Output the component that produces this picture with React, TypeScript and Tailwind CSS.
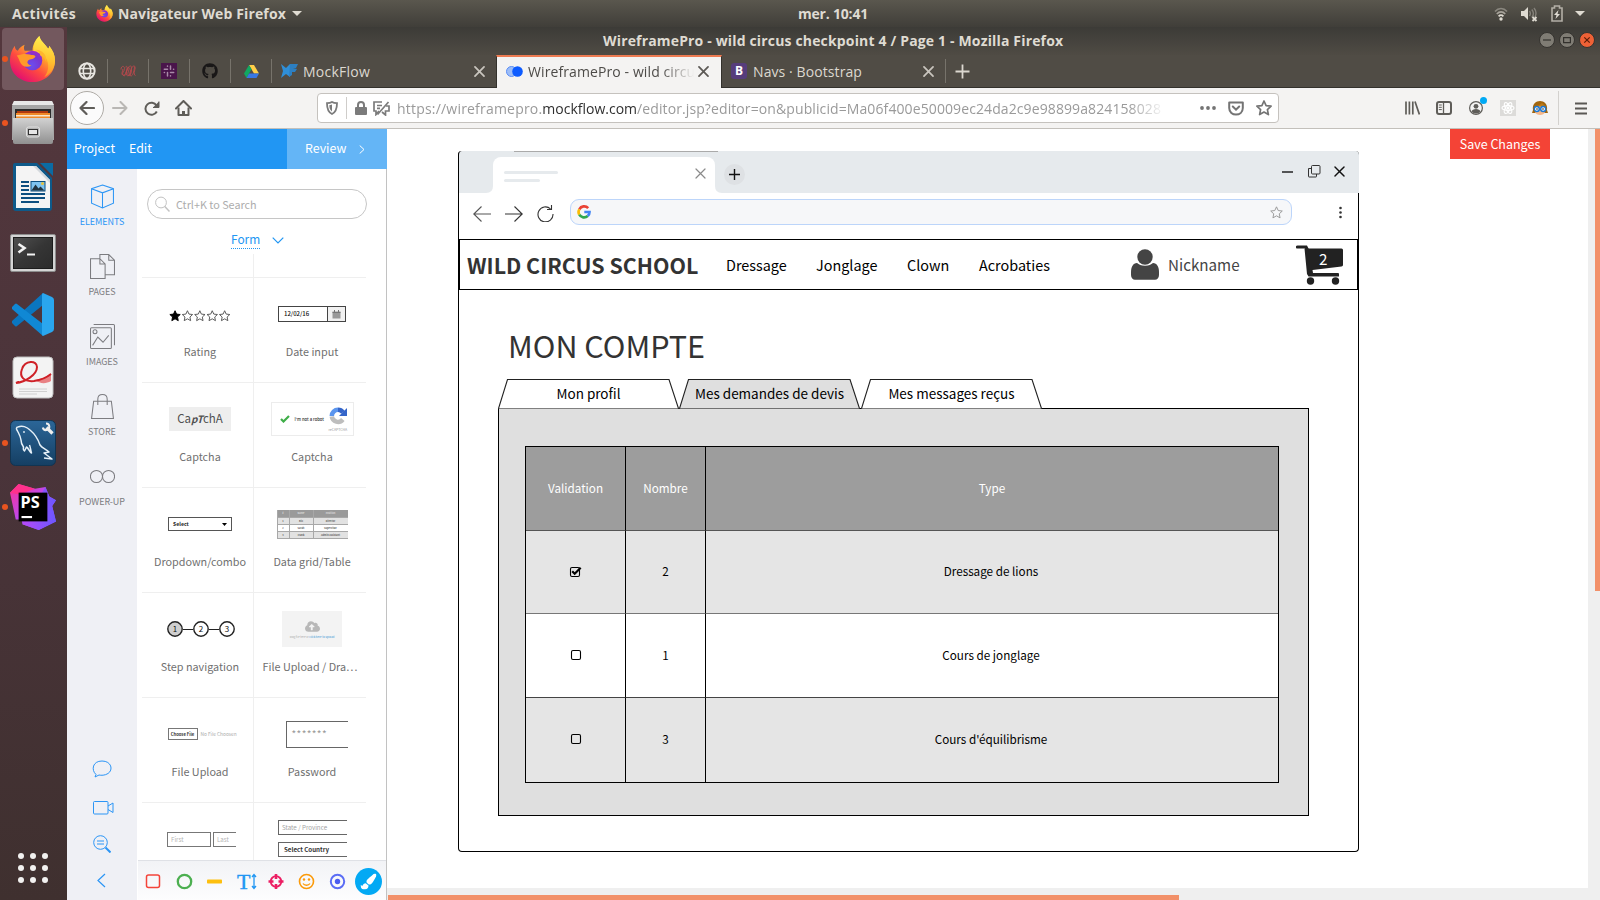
import type { ReactNode } from "react";
import { FaGithub, FaCloudUploadAlt, FaPaintBrush } from "react-icons/fa";

const UI = "font-['Open_Sans',sans-serif] whitespace-nowrap";
const SRC = "font-['Noto_Sans_CJK_SC','Noto_Sans',sans-serif] whitespace-nowrap";

/* ---------- shared drawings ---------- */

function FirefoxLogo({ size, id }: { size: number; id: string }) {
  return (
    <svg width={size} height={size} viewBox="0 0 48 48">
      <defs>
        <linearGradient id={id + "a"} x1="0.85" y1="0.1" x2="0.25" y2="0.95">
          <stop offset="0" stopColor="#fff44f" />
          <stop offset="0.35" stopColor="#ffa52a" />
          <stop offset="0.65" stopColor="#ff4a40" />
          <stop offset="1" stopColor="#e3106f" />
        </linearGradient>
        <radialGradient id={id + "b"} cx="0.45" cy="0.75" r="0.8">
          <stop offset="0" stopColor="#6a4ff0" />
          <stop offset="0.6" stopColor="#7a35cf" />
          <stop offset="1" stopColor="#a928c4" />
        </radialGradient>
        <linearGradient id={id + "c"} x1="0.6" y1="0" x2="0.5" y2="1">
          <stop offset="0" stopColor="#fff250" />
          <stop offset="0.6" stopColor="#ffc02f" />
          <stop offset="1" stopColor="#ff8a2c" />
        </linearGradient>
      </defs>
      <path fill={`url(#${id}a)`} d="M6 10c0 3 1 4 3 5 2-3 4-5 7-6-1 2-1 4 0 6h8c0-6 3-11 7-15 1 5 5 7 9 13 1-1 1-2 1-3 4 5 6 10 6 15 0 13-10 22-23 22S1 38 1 25c0-6 2-11 5-15z" />
      <path fill={`url(#${id}c)`} d="M31 0c1 5 5 7 9 13 1-1 1-2 1-3 4 5 6 10 6 15 0 8-5 14-11 17 5-6 5-14 2-19-3-4-9-6-12-6-3-5 1-13 5-17z" />
      <circle cx="24" cy="25" r="10" fill={`url(#${id}b)`} />
      <path fill="#ff9a2a" d="M8 20c5-2 10-2 13-1 3 1 5 0 6 2-2 4-7 2-8 5-1 2 2 4 4 4-5 3-10 1-12-4-1-3-2-4-3-6z" />
      <path fill="#ffb52c" d="M27 14c7 0 12 5 11 13-1-4-3-6-6-7 0-3-2-5-5-6z" />
    </svg>
  );
}

function Cross({ s = 11, c = "#c9c5be", w = 1.6 }: { s?: number; c?: string; w?: number }) {
  return (
    <svg width={s} height={s} viewBox="0 0 10 10" fill="none" stroke={c} strokeWidth={w} strokeLinecap="round">
      <path d="M.9.9l8.200 8.200M9.100.9L.9 9.100" />
    </svg>
  );
}

const starPath = "M8 1l2.100 4.600 5 .6-3.700 3.400 1 5L8 12.100l-4.400 2.500 1-5L.9 6.200l5-.6z";

/* ---------- desktop bars ---------- */

function TopBar() {
  return (
    <div className={`${UI} flex h-[27px] shrink-0 items-center bg-linear-to-b from-[#5a574e] to-[#403e39] text-[14px] font-bold text-[#dfdbd2]`}>
      <span className="ml-3 w-[84px] tracking-[0.36px]">Activités</span>
      <FirefoxLogo size={17} id="ft" />
      <span className="ml-[5px] w-[174px] tracking-[0.13px]">Navigateur Web Firefox</span>
      <svg width="10" height="5" viewBox="0 0 10 5"><path d="M0 0h10L5 5z" fill="#dfdbd2" /></svg>
      <span className="ml-[496px] tracking-[-0.2px]">mer. 10:41</span>
      <div className="mr-[15px] ml-auto flex items-center">
        <svg width="14" height="14" viewBox="0 0 14 14" fill="none" strokeWidth="1.700">
          <path d="M1 4.500c3.500-4 8.500-4 12 0" stroke="#8a877f" />
          <path d="M2.800 7c2.500-2.800 6-2.800 8.400 0" stroke="#a8a49b" />
          <path d="M4.600 9.400c1.500-1.600 3.300-1.600 4.800 0" stroke="#dfdbd2" />
          <circle cx="7" cy="12" r="1.700" fill="#dfdbd2" />
        </svg>
        <svg className="ml-[13px]" width="17" height="16" viewBox="0 0 17 16" fill="none">
          <path d="M0 5h3l4-4v13l-4-4H0z" fill="#dfdbd2" />
          <path d="M8.500 5c1 1.500 1 3.500 0 5M10.800 3.500c2 2.500 2 5.500 0 8M13 2c2.500 3 2.500 6 1 9" stroke="#85827a" strokeWidth="1.400" />
          <path d="M11.500 11l4 4m0-4l-4 4" stroke="#dfdbd2" strokeWidth="1.800" />
        </svg>
        <svg className="ml-[13px]" width="12" height="17" viewBox="0 0 12 17" fill="none">
          <path d="M1 3h2.500V1h5v2H11v13H1z" stroke="#b3afa6" strokeWidth="1.600" />
          <path d="M7.500 5L3 10h2.500L4.500 14 9 9H6.500z" fill="#dfdbd2" />
        </svg>
        <svg className="ml-[12px]" width="10" height="5" viewBox="0 0 10 5"><path d="M0 0h10L5 5z" fill="#dfdbd2" /></svg>
      </div>
    </div>
  );
}

function Dot({ on }: { on: boolean }) {
  return <span className="flex w-[10px] justify-center">{on && <span className="size-[6px] rounded-full bg-[#e95420]" />}</span>;
}

function Launcher() {
  const apps: { on: boolean; icon: ReactNode }[] = [
    { on: true, icon: <FirefoxLogo size={47} id="fl" /> },
    {
      on: true,
      icon: (
        <svg width="44" height="46" viewBox="0 0 44 46">
          <defs><linearGradient id="cab" x1="0" y1="0" x2="0" y2="1"><stop offset="0" stopColor="#d2d2d2" /><stop offset="1" stopColor="#909090" /></linearGradient></defs>
          <path d="M3 1h38l2 5v34H1V6z" fill="#a6a6a6" />
          <path d="M3 1h38l2 4H1z" fill="#e8e8e8" />
          <path d="M4 9h36v11H4z" fill="#2c2c2c" />
          <path d="M6 11h31v3H6z" fill="#b0390f" /><path d="M5 13h34v5H5z" fill="#f08a28" /><path d="M5 15h34v1.500H5z" fill="#f7e6cc" />
          <path d="M2 18h40v24q0 2-2 2H4q-2 0-2-2z" fill="url(#cab)" />
          <rect x="15.500" y="27" width="13" height="10" rx="2" fill="#b4b4b4" stroke="#e0e0e0" />
          <rect x="17.500" y="29.500" width="9" height="5" fill="#e6e6e6" stroke="#333" />
        </svg>
      ),
    },
    {
      on: false,
      icon: (
        <svg width="42" height="50" viewBox="0 0 42 50">
          <path d="M3 1h22l15 15v30q0 3-3 3H4q-3 0-3-3V3q0-2 2-2z" fill="#0e5a8a" />
          <path d="M28 1h13v13z" fill="#0b6ba3" />
          <path d="M4 4h20l14 14v28H4z" fill="#f4f4f4" />
          <path d="M24 4l14 14v3L21 4z" fill="#d3d8dc" />
          <path d="M9 20h8M9 24h8M9 28h8M9 32h24M9 36h24M9 40h18" stroke="#0d4f80" strokeWidth="1.800" />
          <rect x="19" y="19.500" width="14" height="9.500" fill="#7fc3ef" stroke="#0d4f80" />
          <path d="M19.500 28.500l4-6 3 4 2-2 4 4z" fill="#23343f" /><circle cx="30.500" cy="21.500" r="1.500" fill="#e9c33c" />
        </svg>
      ),
    },
    {
      on: false,
      icon: (
        <svg className="mt-[3px]" width="46" height="38" viewBox="0 0 46 38">
          <defs><linearGradient id="term" x1="0" y1="0" x2="1" y2="1"><stop offset="0" stopColor="#505050" /><stop offset="0.500" stopColor="#353535" /><stop offset="1" stopColor="#2b2b2b" /></linearGradient></defs>
          <rect x=".5" y=".5" width="45" height="37" rx="1.500" fill="#d4d4d4" stroke="#8d8d8d" />
          <rect x="3.500" y="3.500" width="39" height="31" fill="url(#term)" stroke="#1c1c1c" />
          <path d="M8.500 10l6 4-6 4.500" fill="none" stroke="#f2f2f2" strokeWidth="2.600" />
          <path d="M17 20.500h8" stroke="#f2f2f2" strokeWidth="2" />
        </svg>
      ),
    },
    {
      on: false,
      icon: (
        <svg className="mb-px" width="42" height="43" viewBox="0 0 42 43">
          <path d="M31 0v12L5 33q-1 1-2 0l-3-3q-.6-1 0-2z" fill="#0a76c0" />
          <path d="M31 43V31L5 11q-1-1-2 0l-3 3q-.6 1 0 2z" fill="#1088d4" />
          <path d="M31 0l9 4q2 1 2 3v29q0 2-2 3l-9 4q-1-.5-1-2V2q0-1.500 1-2z" fill="#2aa6ee" />
        </svg>
      ),
    },
    {
      on: false,
      icon: (
        <svg className="mb-[3px]" width="42" height="43" viewBox="0 0 42 43">
          <rect x="1" y="1" width="40" height="41" rx="4" fill="#f3f3f3" stroke="#bdbdbd" />
          <path d="M23 24c7-1 12-3 16-7v8c-5 3-11 3-16-1z" fill="#e98284" />
          <path d="M4 27c9-1 21-8 21-16 0-7-12-7-15 2-3 8 2 13 12 12 7-1 12-3 17-7M7 26c-1 0-3 1-3 1" fill="none" stroke="#cf2127" strokeWidth="2" />
          <path d="M7 33h28M7 35.500h28M7 38h18" stroke="#d0d0d0" />
        </svg>
      ),
    },
    {
      on: true,
      icon: (
        <svg width="46" height="46" viewBox="0 0 46 46">
          <defs><linearGradient id="sql" x1="0" y1="0" x2="0" y2="1"><stop offset="0" stopColor="#2b6698" /><stop offset="1" stopColor="#153f63" /></linearGradient></defs>
          <rect x=".5" y=".5" width="45" height="45" rx="5" fill="url(#sql)" stroke="#123451" />
          <path d="M8 7c-2 0-2 2-.5 4 1.500 3 3 5 3.500 9 0 3 1 5 2.500 7 0 2-1 3 1 4l2-4c2 1 3 5 5 6-1-3-1-6-2-8M8 7c4-2 9 0 12 3 6 5 8 9 10 15 2 3 6 4 9 7l-5 1 8 6-8-1" fill="none" stroke="#e5f0f8" strokeWidth="1.500" strokeLinejoin="round" />
          <circle cx="14" cy="12" r=".9" fill="#e5f0f8" />
          <path d="M36.500 7.500l6 6" stroke="#eee" strokeWidth="3.200" fill="none" />
          <path d="M36 3.500a3.300 3.300 0 1 1-3.200 4" stroke="#eee" strokeWidth="2" fill="none" />
        </svg>
      ),
    },
    {
      on: true,
      icon: (
        <svg width="48" height="48" viewBox="0 0 48 48">
          <defs>
            <linearGradient id="psa" x1="0" y1="0" x2="1" y2="1"><stop offset="0" stopColor="#ff318c" /><stop offset="0.500" stopColor="#b74af7" /><stop offset="1" stopColor="#6b57ff" /></linearGradient>
            <linearGradient id="psb" x1="0" y1="0" x2="1" y2="0"><stop offset="0" stopColor="#b74af7" /><stop offset="1" stopColor="#6b57ff" /></linearGradient>
          </defs>
          <path d="M0 9L9 0l17 5 11-2 4 10 7 4-4 6 4 16-18 9-17-6-1-5-6 0z" fill="url(#psa)" />
          <path d="M37 3l4 10 7 4-4 6 4 16-18 9-17-6z" fill="url(#psb)" />
          <path d="M0 9L9 0l17 5-16 6z" fill="#ff318c" />
          <rect x="9" y="9" width="30" height="30" fill="#000" />
          <text x="11" y="25" fill="#fff" fontSize="17" fontWeight="bold" fontFamily="Noto Sans, sans-serif">PS</text>
          <path d="M12 34.500h11" stroke="#fff" strokeWidth="2.200" />
        </svg>
      ),
    },
  ];
  return (
    <div className="flex w-[67px] shrink-0 flex-col bg-linear-to-b from-[#54373d] via-[#4a343a] to-[#3f302f]">
      {apps.map((a, i) => (
        <div key={i} className="flex h-16 items-center">
          {i === 0 ? (
            <div className="ml-[2px] flex h-[62px] w-[62px] items-center rounded-[4px] bg-[#73585e]">
              <span className="-ml-[2px] flex"><Dot on /></span>
              <span className="-ml-px">{a.icon}</span>
            </div>
          ) : (
            <>
              <Dot on={a.on} />
              <span className="flex w-[46px] justify-center">{a.icon}</span>
            </>
          )}
        </div>
      ))}
      <div className="mt-auto mb-[17px] ml-[18px] grid w-[30px] grid-cols-3 gap-[6px]">
        {Array.from({ length: 9 }, (_, i) => <span key={i} className="size-[6px] rounded-full bg-[#f2f1f0]" />)}
      </div>
    </div>
  );
}

/* ---------- Firefox chrome ---------- */

function WindowButton({ red, children }: { red?: boolean; children: ReactNode }) {
  return (
    <span className={`flex size-4 items-center justify-center rounded-full border border-[#35332f] ${red ? "bg-[#ee6136]" : "bg-[#7f7c74]"}`}>
      <svg width="8" height="8" viewBox="0 0 8 8" fill="none" stroke={red ? "#5a1d08" : "#33312d"} strokeWidth="1.200">{children}</svg>
    </span>
  );
}

function TitleBar() {
  return (
    <div className="flex h-7 items-center bg-linear-to-b from-[#3c3b37] to-[#4f4b44] pb-[2px]">
      <span className={`${UI} ml-[536px] text-[14px] font-bold tracking-[0.16px] text-[#dfdbd2]`}>
        WireframePro - wild circus checkpoint 4 / Page 1 - Mozilla Firefox
      </span>
      <div className="mr-[5px] ml-auto flex gap-1">
        <WindowButton><path d="M0 4h8" /></WindowButton>
        <WindowButton><path d="M.6 1.600h6.800v5H.6z" /></WindowButton>
        <WindowButton red><path d="M1.300 1.300l5.400 5.400M6.700 1.300L1.300 6.700" /></WindowButton>
      </div>
    </div>
  );
}

function TabStrip() {
  const pins = [
    <svg key="g" width="18" height="18" viewBox="0 0 16 16" fill="none" stroke="#e8e6e1" strokeWidth="1.400"><circle cx="8" cy="8" r="6.800" strokeWidth="1.800" /><ellipse cx="8" cy="8" rx="3.300" ry="6.800" /><path d="M1 5.800h14M1 10.200h14" /></svg>,
    <svg key="w" width="16" height="12" viewBox="0 0 16 12" fill="none" stroke="#b8484d" strokeWidth=".9"><path d="M1 4.500c0-4 3.500-4 3.500-1S1.500 8 3 10s3 0 3.500-3S9 1 10.500 1s1 3 0 5-1 5 .5 5 3-4 3.500-9" /><path d="M2.500 5c1-2 0 1-.5 3s2 3.500 3.500.5S8 1 9 2.500 7 8 8 10s3 0 3-3 1-6 3-6 1 3 .5 5-.5 4.500 1 4.500" /><path d="M5.500 2c2-2 2 1 1 4s0 5.500 2 4.500 3-4 3-6" /></svg>,
    <svg key="s" width="16" height="16" viewBox="0 0 16 16"><rect width="16" height="16" fill="#4a154b" /><g stroke="#a98ba9" strokeWidth="1.500" strokeLinecap="round"><path d="M6.500 3v.3M3.300 6.300h3.200M9.500 3v3.300M12.700 6.300h-.2M6.500 9.500V13M3.300 9.500h.2M9.500 9.500h3.200M9.500 12.700v.2" /></g></svg>,
    <FaGithub key="h" size={16} color="#191717" />,
    <svg key="d" width="15" height="14" viewBox="0 0 15 14"><path d="M5 1h5l5 8.500h-5z" fill="#ffcf48" /><path d="M5 1l2.500 4.300L2.500 14 0 9.500z" fill="#11a861" /><path d="M5 9.500h10L12.500 14h-10z" fill="#3777e3" /></svg>,
  ];
  return (
    <div className={`${UI} flex h-[33px] border-b border-[#33312c] bg-[#504c45] text-[14px] text-[#dcd8d0]`}>
      {pins.map((p, i) => (
        <div key={i} className="flex w-[41px] items-center">
          <span className="flex w-10 justify-center">{p}</span>
          <span className="h-6 w-px bg-[#77736b]" />
        </div>
      ))}
      <div className="flex w-[224px] items-center pl-[9px]">
        <svg width="17" height="14" viewBox="0 0 17 14"><path d="M0 0l5 4 4-4v13L5 10l-5 4 2-7z" fill="#2f8fd8" /><path d="M9 0h8l-2 4h-3l4 1-2 3h-3v3l-3 2z" fill="#2c7fc2" /></svg>
        <span className="ml-[5px] tracking-[0.24px]">MockFlow</span>
        <span className="mr-[11px] ml-auto"><Cross /></span>
      </div>
      <div className="-mb-px flex w-[226px] items-center border-x border-t-2 border-x-[#33312c] border-t-[#ee7b52] bg-[#f4f3f2] pb-[2px] pl-[9px] text-[#4d4b48]">
        <svg width="17" height="11" viewBox="0 0 17 11"><circle cx="5.500" cy="5.500" r="5" fill="#9dbdf7" stroke="#5a8df5" /><circle cx="11.500" cy="5.500" r="5.300" fill="#0d5bff" /></svg>
        <span className="ml-[5px] w-[166px] overflow-hidden tracking-[0.1px] [mask-image:linear-gradient(to_right,black_80%,transparent)]">WireframePro - wild circus</span>
        <span className="ml-[4px]"><Cross c="#5d5a56" /></span>
      </div>
      <div className="flex w-[224px] items-center pl-[9px]">
        <span className="flex size-4 items-center justify-center rounded-[3px] bg-[#563d7c] text-[12px] font-bold text-white">B</span>
        <span className="ml-[6px] tracking-[0.09px]">Navs · Bootstrap</span>
        <span className="mr-[11px] ml-auto"><Cross /></span>
        <span className="h-6 w-px bg-[#77736b]" />
      </div>
      <svg className="ml-[9px] self-center" width="15" height="15" viewBox="0 0 15 15" stroke="#dcd8d0" strokeWidth="1.800"><path d="M7.500.5v14M.5 7.500h14" /></svg>
    </div>
  );
}

function NavBar() {
  return (
    <div className="flex h-[41px] items-center border-b border-[#c3c0bb] bg-[#f4f3f2]">
      <span className="ml-[3px] flex size-[34px] items-center justify-center rounded-full border border-[#aeaba6] bg-[#fbfbfb]">
        <svg width="16" height="14" viewBox="0 0 16 14" fill="none" stroke="#5f5d59" strokeWidth="2.200" strokeLinecap="round" strokeLinejoin="round"><path d="M15 7H1.500M7.500 1l-6 6 6 6" /></svg>
      </span>
      <svg className="ml-2" width="16" height="14" viewBox="0 0 16 14" fill="none" stroke="#b9b7b4" strokeWidth="2" strokeLinecap="round" strokeLinejoin="round"><path d="M1 7h13.500M8.500 1l6 6-6 6" /></svg>
      <svg className="ml-[16px]" width="16" height="15" viewBox="0 0 16 15" fill="none" stroke="#5f5d59" strokeWidth="2"><path d="M12.800 10.500a6 6 0 1 1-.3-6" /><path d="M15 .5v6H9" fill="#5f5d59" strokeWidth="1" /></svg>
      <svg className="ml-[15px]" width="17" height="16" viewBox="0 0 17 16" fill="none" stroke="#5f5d59" strokeWidth="2" strokeLinejoin="round"><path d="M1 8.500L8.500 1 16 8.500" strokeLinecap="round" /><path d="M3.500 7.500V15h10V7.500" /><path d="M8.500 15v-4" strokeWidth="3" /></svg>
      <div className={`${UI} ml-[125px] flex h-[30px] w-[962px] items-center rounded-[4px] border border-[#c5c2be] bg-white text-[14px] text-[#9a9a9a]`}>
        <svg className="ml-[8px]" width="12" height="14" viewBox="0 0 12 14" fill="none" stroke="#7b7b7b" strokeWidth="1.800"><path d="M6 1c1.500 1 3 1.200 5 1.200C11 8 10 11 6 13 2 11 1 8 1 2.200 3 2.200 4.500 2 6 1z" /><path d="M6 3.500v7C4 9 3.300 7 3.300 4.200z" fill="#7b7b7b" stroke="none" /></svg>
        <span className="ml-2 h-[22px] w-px bg-[#cfcdca]" />
        <svg className="ml-[8px]" width="12" height="14" viewBox="0 0 12 14"><rect y="6" width="12" height="8" rx="1" fill="#7b7b7b" /><path d="M3 6.500V4a3 3 0 0 1 6 0v2.500" fill="none" stroke="#7b7b7b" strokeWidth="2" /></svg>
        <svg className="ml-[6px]" width="17" height="15" viewBox="0 0 17 15" fill="none" stroke="#7b7b7b" strokeWidth="1.700"><path d="M9 1H1v9h2v3.500L6 10" /><path d="M13 5h3v5h-3.500v4L9 11" /><path d="M4 4.500h5M4 7.300h3M15.500 1L4.500 13.500" /></svg>
        <div className="ml-[7px] w-[769px] overflow-hidden [mask-image:linear-gradient(to_right,black_95%,transparent)]">
          <span className="tracking-[0.2px]">https://wireframepro.</span>
          <span className="text-[#303030]">mockflow.com</span>
          <span className="tracking-[0.1px]">/editor.jsp?editor=on&amp;publicid=Ma06f400e50009ec24da2c9e98899a824158028</span>
        </div>
        <svg className="ml-[34px]" width="16" height="4" viewBox="0 0 16 4" fill="#747474"><circle cx="2" cy="2" r="1.900" /><circle cx="8" cy="2" r="1.900" /><circle cx="14" cy="2" r="1.900" /></svg>
        <svg className="ml-3" width="16" height="15" viewBox="0 0 16 15" fill="none" stroke="#747474" strokeWidth="2"><path d="M1.200 1.500h13.600V7c0 8.700-13.600 8.700-13.600 0z" strokeLinejoin="round" /><path d="M4.800 5.500L8 8.700l3.200-3.200" strokeLinecap="round" /></svg>
        <svg className="ml-3" width="16" height="16" viewBox="0 0 16 16" fill="none" stroke="#747474" strokeWidth="1.700" strokeLinejoin="round"><path d={starPath} /></svg>
      </div>
      <svg className="ml-[126px]" width="15" height="14" viewBox="0 0 15 14" fill="none" stroke="#5f5d59" strokeWidth="1.700"><path d="M1 .5v13M4.400.5v13M7.800.5v13M10 .5l4.400 13" /></svg>
      <svg className="ml-4" width="16" height="14" viewBox="0 0 16 14" fill="none" stroke="#5f5d59" strokeWidth="2"><rect x="1" y="1" width="14" height="12" rx="2" /><path d="M7.500 1v12" strokeWidth="1.300" /><path d="M2.800 4h3M2.800 6.300h3M2.800 8.600h3" strokeWidth="1" /></svg>
      <div className="relative ml-[17px] h-[14px] w-[14px]">
        <svg width="14" height="14" viewBox="0 0 14 14"><circle cx="7" cy="7" r="6.400" fill="none" stroke="#5f5d59" strokeWidth="1.200" /><circle cx="7" cy="5.300" r="2.400" fill="#5f5d59" /><path d="M2.700 10.600c0-3.600 8.600-3.600 8.600 0A5 5 0 0 1 7 12.500a5 5 0 0 1-4.300-1.900z" fill="#5f5d59" /></svg>
        <span className="absolute -top-[4px] -right-[4px] size-[7px] rounded-full bg-[#00a9f4]" />
      </div>
      <span className="ml-[17px] flex size-4 items-center justify-center bg-[#dcdbd9]">
        <svg width="14" height="14" viewBox="0 0 14 14" fill="none" stroke="#fff" strokeWidth="1.100"><ellipse cx="7" cy="7" rx="6" ry="2.400" /><ellipse cx="7" cy="7" rx="6" ry="2.400" transform="rotate(60 7 7)" /><ellipse cx="7" cy="7" rx="6" ry="2.400" transform="rotate(120 7 7)" /><circle cx="7" cy="7" r="1" fill="#fff" /></svg>
      </span>
      <svg className="ml-4" width="16" height="15" viewBox="0 0 16 15"><path d="M1 9C0 3 4 0 8 0s8 3 7 9l1 3H0z" fill="#a2660f" /><path d="M3 5h10v6c-1 4-9 4-10 0z" fill="#f5b78a" /><path d="M2 5c4 0 6-1 8-3l4 4z" fill="#bd7a19" /><circle cx="4.800" cy="8" r="2.500" fill="#fff" stroke="#1976d2" strokeWidth="1.400" /><circle cx="11.200" cy="8" r="2.500" fill="#fff" stroke="#1976d2" strokeWidth="1.400" /><circle cx="5" cy="8" r=".8" fill="#222" /><circle cx="11" cy="8" r=".8" fill="#222" /></svg>
      <span className="ml-[10px] h-[34px] w-px bg-[#d3d1ce]" />
      <svg className="ml-[16px]" width="12" height="13" viewBox="0 0 12 13" stroke="#5a5855" strokeWidth="2"><path d="M0 1.500h12M0 6.500h12M0 11.500h12" /></svg>
    </div>
  );
}

/* ---------- editor side panel ---------- */

function SideRail() {
  const items: [string, ReactNode][] = [
    ["ELEMENTS", <path key="p" d="M12 1l10.500 3.500v14L12 23 1.500 18.500v-14zM1.500 4.500L12 8.500l10.500-4M12 8.500V23" />],
    ["PAGES", <path key="p" d="M9.500 4.500h-9v19h14v-14zM9.500 4.500v5h5M9.500 4V.5h8.500l5.500 5.500v14h-8.500M18 .5V6h5.500" />],
    ["IMAGES", <g key="p"><rect x=".5" y="3.500" width="20" height="20" rx="1" /><path d="M3.500.5h19q1 0 1 1v19M2.500 20.500l5-8 5 5 5.500-6.500" /><circle cx="4.800" cy="7.500" r="1.900" /></g>],
    ["STORE", <path key="p" d="M3.500 7h17l2 16.500h-21zM7.500 10.500V5c0-6 9-6 9 0v5.500" />],
    ["POWER-UP", <g key="p"><circle cx="6.200" cy="12" r="5.800" /><circle cx="17.800" cy="12" r="5.800" /></g>],
  ];
  return (
    <div className="flex w-[70px] shrink-0 flex-col items-center bg-[#eff0f5] pt-[15px]">
      {items.map(([name, d], i) => (
        <div key={name} className={`flex h-[70px] flex-col items-center ${i === 0 ? "text-[#2b95f5]" : "text-[#7c7c80]"}`}>
          <svg className="ml-px" width="25" height="25" viewBox="0 0 24 24" fill="none" stroke="currentColor" strokeWidth="1">{d}</svg>
          <span className={`${SRC} mt-[5px] text-[9px] leading-4 tracking-[-0.05px]`}>{name}</span>
        </div>
      ))}
      <svg className="mt-auto" width="20" height="18" viewBox="0 0 20 18" fill="none" stroke="#2b95f5"><path d="M4 14.500C-1 10 .5 1 10 1s11.500 9 6 12.500c-3 2-7 2-9 1.500l-4 2z" /></svg>
      <svg className="mt-[23px] ml-[2px]" width="21" height="14" viewBox="0 0 21 14" fill="none" stroke="#2b95f5"><rect x=".5" y=".5" width="14.500" height="12.500" rx="1" /><path d="M15 5l5-3v9.500l-5-3" /></svg>
      <svg className="mt-[20px]" width="18" height="18" viewBox="0 0 18 18" fill="none" stroke="#2b95f5"><circle cx="7.500" cy="7.500" r="6.800" /><path d="M4 6h7M4 9h7" /><path d="M12.500 12.500l5 5" strokeWidth="2" /></svg>
      <svg className="mt-[20px] mr-[2px] mb-[12px]" width="9" height="15" viewBox="0 0 9 15" fill="none" stroke="#2b95f5" strokeWidth="1.200"><path d="M8 1L1 7.500 8 14" /></svg>
    </div>
  );
}

function Cell({ name, left, children }: { name?: string; left?: boolean; children?: ReactNode }) {
  return (
    <div className={`flex h-[105px] flex-col items-center border-b border-[#efefef] pt-[11px] ${left ? "border-r pl-[5px]" : "pl-[4px]"}`}>
      <div className="flex h-[50px] items-center">{children}</div>
      {name && <span className={`${SRC} mt-px text-[10.800px] leading-[22px] text-[#707070] ${name.endsWith("…") ? "pr-1" : ""}`}>{name}</span>}
    </div>
  );
}

function Thumbs() {
  return (
    <div className={`${SRC} mx-[5px] h-[606px] w-[224px] overflow-hidden`}>
      <div className="grid grid-cols-2">
        <div className="h-6 border-r border-b border-[#efefef]" />
        <div className="h-6 border-b border-[#efefef]" />
        <Cell name="Rating" left>
          <svg className="mt-1" width="62" height="12" viewBox="0 0 62 12" fill="none" stroke="#444">
            {[0, 1, 2, 3, 4].map((i) => (
              <path key={i} transform={`translate(${0.2 + i * 12.4} 0) scale(.73)`} d={starPath} fill={i ? "none" : "#000"} stroke={i ? "#555" : "#000"} strokeWidth="1.300" />
            ))}
          </svg>
        </Cell>
        <Cell name="Date input">
          <div className="flex h-[16px] w-[68px] border border-[#444]">
            <span className="flex-1 pl-[5px] text-[6px] leading-[13px] font-medium text-[#111]">12/02/16</span>
            <span className="flex w-[18px] items-center justify-center border-l border-[#444] bg-[#f1f1f1]">
              <svg width="9" height="9" viewBox="0 0 9 9"><path d="M.5 1.500h8v7h-8z" fill="#999" /><path d="M.5 2.500h8M2.500 0v2M6.500 0v2" stroke="#777" /></svg>
            </span>
          </div>
        </Cell>
        <Cell name="Captcha" left>
          <div className="flex h-6 w-[62px] items-center justify-center bg-[#eeeeee] text-[11.500px] leading-none text-[#505050]">
            Ca<b className="text-[10px] italic">pT</b>chA
          </div>
        </Cell>
        <Cell name="Captcha">
          <div className="flex h-[34px] w-[83px] items-center border border-[#ececec] pl-[8px]">
            <svg width="10" height="8" viewBox="0 0 10 8" fill="none" stroke="#3fae49" strokeWidth="2.200"><path d="M1 4l2.500 2.500L9 1" /></svg>
            <span className="ml-[5px] w-[30px] text-[4.200px] font-medium text-[#333]">I'm not a robot</span>
            <span className="ml-[4px] flex flex-col items-center">
              <svg width="18" height="18" viewBox="0 0 18 18" fill="none" strokeWidth="4.500"><path d="M2.800 9a6.200 6.200 0 0 1 6.200-6.200" stroke="#5b95ee" /><path d="M9 2.800a6.200 6.200 0 0 1 5 2.500" stroke="#3465c9" /><path d="M18 1v8h-8z" fill="#3465c9" stroke="none" /><path d="M2.800 9.500a6.200 6.200 0 0 0 11 3" stroke="#bdbdbd" /></svg>
              <span className="mt-[2px] text-[3.500px] leading-[5px] text-[#999]">reCAPTCHA</span>
            </span>
          </div>
        </Cell>
        <Cell name="Dropdown/combo" left>
          <div className="flex h-[14px] w-[64px] items-center justify-between border border-[#555] px-1 text-[5.200px] leading-[12px] font-bold text-[#222]">
            Select<svg width="5" height="3" viewBox="0 0 5 3"><path d="M0 0h5L2.500 3z" /></svg>
          </div>
        </Cell>
        <Cell name="Data grid/Table">
          <div className="grid w-[71px] grid-cols-[12px_24px_35px] text-center text-[2.400px] leading-[7px] font-bold text-[#555]">
            {["#", "Name", "Position", "1", "Bill", "Director", "2", "Sarah", "Supervisor", "3", "Frank", "Admin Assistant"].map((t, i) => (
              <span key={i} className={`border-b border-l border-[#a8a8a8] ${i < 3 ? "h-[8px] bg-[#9a9a9a] text-[#ddd]" : i > 5 && i < 9 ? "h-[7px] bg-white" : "h-[7px] bg-[#e2e2e2]"}`}>{t}</span>
            ))}
          </div>
        </Cell>
        <Cell name="Step navigation" left>
          <div className="ml-px flex items-center text-[8px] leading-none text-[#111]">
            {[1, 2, 3].map((n) => (
              <span key={n} className="flex items-center">
                {n > 1 && <span className="h-px w-[10px] bg-[#222]" />}
                <svg width="16" height="16" viewBox="0 0 16 16">
                  <circle cx="8" cy="8" r="7.200" fill={n === 1 ? "#cfcfcf" : "#fff"} stroke="#222" strokeWidth="1.400" />
                  <text x="8" y="11" textAnchor="middle" fill="#111" fontSize="8">{n}</text>
                </svg>
              </span>
            ))}
          </div>
        </Cell>
        <Cell name="File Upload / Dra…">
          <div className="flex h-9 w-[60px] flex-col items-center bg-[#f3f3f3] pt-[8px]">
            <FaCloudUploadAlt size={15} color="#b8b8b8" />
            <span className="text-[2.600px] leading-[6px] text-[#aaa]">Drag file here or <span className="font-bold text-[#6faedb]">click here to upload</span></span>
          </div>
        </Cell>
        <Cell name="File Upload" left>
          <div className="flex items-center text-[4.800px] leading-none text-[#aaa]">
            <span className="flex h-3 w-[30px] items-center justify-center border border-[#777] text-[4.200px] font-bold text-[#333]">Choose File</span>
            <span className="ml-[3px] w-[32px]">No File Choosen</span>
          </div>
        </Cell>
        <Cell name="Password">
          <div className="mt-px ml-[9px] h-[27px] w-[62px] border border-r-0 border-[#666] pl-[5px] text-[10px] leading-[24px] tracking-[0.400px] text-[#999]">*******</div>
        </Cell>
        <Cell left>
          <div className="ml-[3px] flex gap-[2px] text-[6.200px] leading-[13px] text-[#b5b5b5]">
            <span className="h-[15px] w-[44px] border border-[#777] pl-[3px]">First</span>
            <span className="h-[15px] w-[23px] border border-r-0 border-[#777] pl-[3px]">Last</span>
          </div>
        </Cell>
        <Cell>
          <div className="ml-px flex flex-col gap-[7px] pb-[2px] text-[6.200px] leading-[13px] text-[#a5a5a5]">
            <span className="h-[15px] w-[69px] border border-r-0 border-[#666] pl-[3px]">State / Province</span>
            <span className="h-[15px] w-[69px] border border-r-0 border-[#666] pl-[5px] font-bold text-[#333]">Select Country</span>
          </div>
        </Cell>
      </div>
    </div>
  );
}

function ShapeBar() {
  return (
    <div className="ml-px flex h-10 items-center border-t border-[#dfe1e6] bg-linear-to-b from-[#f2f3f6] to-[#fdfdfe]">
      <svg width="248" height="30" viewBox="0 0 248 30" fill="none">
        <rect x="8.500" y="9" width="13" height="12.500" rx="2" stroke="#f4443a" strokeWidth="1.500" />
        <circle cx="46.500" cy="15.500" r="6.700" stroke="#4caf50" strokeWidth="2.300" />
        <rect x="69" y="13.500" width="15" height="4" rx=".8" fill="#fdbf0f" />
        <text x="99" y="23" fontFamily="Liberation Serif" fontSize="22" fill="#2196f3" stroke="#2196f3" strokeWidth=".4">T</text>
        <path d="M116 9v13M114 11l2-2.500 2 2.500M114 20l2 2.500 2-2.500" stroke="#2196f3" strokeWidth="1.300" />
        <circle cx="138" cy="15.500" r="5.300" stroke="#ec1e63" strokeWidth="1.800" />
        <path d="M138 8v5M138 18v5M130.500 15.500h5M140.500 15.500h5" stroke="#ec1e63" strokeWidth="2.600" />
        <circle cx="168.500" cy="15.500" r="7" stroke="#fb9a09" strokeWidth="1.600" />
        <circle cx="166" cy="13.500" r="1.200" fill="#fb9a09" /><circle cx="171" cy="13.500" r="1.200" fill="#fb9a09" />
        <path d="M165 17.500c1.500 2.300 5.500 2.300 7 0" stroke="#fb9a09" strokeWidth="1.300" />
        <circle cx="199.500" cy="15.500" r="6.700" stroke="#5a6cf5" strokeWidth="2" /><circle cx="199.500" cy="15.500" r="2.700" fill="#4a5cf0" />
        <circle cx="230.500" cy="15.500" r="13.500" fill="#03a9f4" />
        <g transform="translate(222.500 7.500)"><FaPaintBrush size={16} color="#fff" /></g>
      </svg>
    </div>
  );
}

function LeftApp() {
  return (
    <div className="flex w-[320px] shrink-0 flex-col">
      <div className={`${SRC} flex h-10 shrink-0 bg-[#2196f3] text-[12.400px] leading-[38px] text-white`}>
        <span className="ml-[7px] w-[55px]">Project</span>
        <span className="w-[158px]">Edit</span>
        <span className="flex w-[100px] items-center bg-[#64b5f6] pb-[2px] pl-[18px]">
          Review
          <svg className="mt-[3px] ml-[13px]" width="6" height="9" viewBox="0 0 6 9" fill="none" stroke="#fff"><path d="M.7.5l4.300 4-4.300 4" /></svg>
        </span>
      </div>
      <div className="flex min-h-0 flex-1">
        <SideRail />
        <div className="flex w-[250px] flex-col border-r border-[#c2c2c2] bg-white">
          <div className={`${SRC} mt-[20px] ml-[10px] flex h-[30px] w-[220px] shrink-0 items-center rounded-full border border-[#c6c6c6] text-[10.800px] text-[#adadad]`}>
            <svg className="ml-[7px]" width="15" height="16" viewBox="0 0 15 16" fill="none" stroke="#c2c2c2"><circle cx="6" cy="6.500" r="5.400" /><path d="M9.800 10.500l4.700 5" strokeWidth="1.500" /></svg>
            <span className="mt-px ml-[6px]">Ctrl+K to Search</span>
          </div>
          <div className={`${SRC} ml-[94px] flex h-[35px] shrink-0 items-start pt-[11px] text-[11.900px] text-[#2196f3]`}>
            <span className="border-b border-dotted border-[#2196f3] leading-[18px]">Form</span>
            <svg className="mt-[7px] ml-[12px]" width="12" height="7" viewBox="0 0 12 7" fill="none" stroke="#2196f3" strokeWidth="1.200"><path d="M.7.7L6 6 11.300.7" /></svg>
          </div>
          <Thumbs />
          <ShapeBar />
        </div>
      </div>
    </div>
  );
}

/* ---------- wireframe page ---------- */

function MockHeader() {
  return (
    <>
      <div className="-mx-px flex h-[42px] shrink-0 rounded-t-[4px] border-l border-l-black bg-[#e6eaed]">
        <div className="relative mt-[6px] ml-[34px] flex h-9 w-[222px] rounded-t-[8px] bg-white">
          <span className="absolute -top-[6px] left-[21px] h-px w-[204px] bg-[#aaaaaa]" />
          <svg className="absolute bottom-0 -left-[7px]" width="7" height="7" viewBox="0 0 7 7"><path d="M7 0v7H0q7 0 7-7z" fill="#fff" /></svg>
          <svg className="absolute -right-[7px] bottom-0" width="7" height="7" viewBox="0 0 7 7"><path d="M0 0v7h7q-7 0-7-7z" fill="#fff" /></svg>
          <div className="mt-[14px] ml-[11px] flex flex-col gap-[5px]">
            <span className="h-[3px] w-[54px] rounded-full bg-[#e6eaed]" />
            <span className="h-[3px] w-[36px] rounded-full bg-[#e6eaed]" />
          </div>
          <span className="mt-[11px] mr-[9px] ml-auto"><Cross s={11} c="#8a8a8a" w={1.1} /></span>
        </div>
        <span className="mt-[13px] ml-[9px] flex size-[21px] items-center justify-center rounded-full bg-[#dee1e4]">
          <svg width="11" height="11" viewBox="0 0 11 11" stroke="#111" strokeWidth="1.400"><path d="M5.500 0v11M0 5.500h11" /></svg>
        </span>
        <div className="mr-[14px] ml-auto flex h-10 items-center">
          <svg className="mt-px" width="11" height="2" viewBox="0 0 11 2"><path d="M0 1h11" stroke="#222" strokeWidth="1.500" /></svg>
          <svg className="mt-px ml-[15px]" width="13" height="13" viewBox="0 0 13 13" fill="none" stroke="#333"><rect x="3.500" y=".5" width="8.500" height="8.500" rx="1" /><path d="M3.500 3.500H.5v8q0 .5.5.5h7q.5 0 .5-.5V9" /></svg>
          <span className="ml-[13px]"><Cross s={11} c="#111" w={1.3} /></span>
        </div>
      </div>
      <div className="flex h-[46px] shrink-0 items-start">
        <div className="mt-[12px] ml-[14px] flex items-center gap-[14px]">
          <svg width="18" height="16" viewBox="0 0 18 16" fill="none" stroke="#555" strokeWidth="1.100"><path d="M18 8H.8M8.500.5L.8 8l7.700 7.500" /></svg>
          <svg width="18" height="16" viewBox="0 0 18 16" fill="none" stroke="#333" strokeWidth="1.100"><path d="M0 8h17.200M9.500.5L17.200 8l-7.700 7.500" /></svg>
          <svg width="17" height="17" viewBox="0 0 17 17" fill="none" stroke="#333" strokeWidth="1.100"><path d="M13.500 3.800A7.500 7.500 0 1 0 16 9M14.500 0v4.500H10" /></svg>
        </div>
        <div className="mt-[6px] ml-[16px] flex h-[26px] w-[722px] items-center rounded-[9px] border border-[#bcd5fa] bg-[#f6f7f9]">
          <svg className="ml-[6px]" width="14" height="14" viewBox="0 0 14 14" fill="none" strokeWidth="2.700"><path d="M11.200 3.200A5.500 5.500 0 0 0 2.300 4.300" stroke="#ea4335" /><path d="M2.300 4.300a5.500 5.500 0 0 0 0 5.400" stroke="#fbbc05" /><path d="M2.300 9.700a5.500 5.500 0 0 0 8.400 1.400" stroke="#2fa84f" /><path d="M10.700 11.100A5.500 5.500 0 0 0 12.500 7H7.300" stroke="#4285f4" /></svg>
          <svg className="mr-[8px] ml-auto" width="13" height="13" viewBox="0 0 16 16" fill="none" stroke="#999" strokeWidth="1.200"><path d={starPath} /></svg>
        </div>
        <svg className="mt-[13px] ml-[47px]" width="3" height="13" viewBox="0 0 3 13" fill="#333"><circle cx="1.500" cy="2" r="1.300" /><circle cx="1.500" cy="6.500" r="1.300" /><circle cx="1.500" cy="11" r="1.300" /></svg>
      </div>
      <div className={`${SRC} flex h-[51px] w-[899px] shrink-0 items-center border border-black text-[14.400px] text-black`}>
        <span className="mt-px ml-[7px] w-[259px] text-[21.400px] font-bold text-[#333]">WILD CIRCUS SCHOOL</span>
        <span className="w-[90px]">Dressage</span>
        <span className="w-[91px]">Jonglage</span>
        <span className="w-[72px]">Clown</span>
        <span className="w-[152px]">Acrobaties</span>
        <svg width="28" height="31" viewBox="0 0 28 31" fill="#444"><circle cx="14" cy="8" r="7.700" /><path d="M6 14c2 1.500 4 2.800 8 2.800s6-1.300 8-2.800c4 0 6 4 6 9v3c0 3-2 4.700-4 4.700H4c-2 0-4-1.700-4-4.700v-3c0-5 2-9 6-9z" /></svg>
        <span className="ml-[9px] text-[15.200px] text-[#444]">Nickname</span>
        <div className="relative mr-[14px] ml-auto h-10 w-[47px]">
          <svg width="47" height="40" viewBox="0 0 47 40"><path d="M1.500 2h8.500l1.500 3" fill="none" stroke="#222" strokeWidth="3.200" strokeLinecap="round" /><path d="M8.500 3.500h37q1.500 0 1.500 1.500v15q0 1.200-1.500 1.500L16.500 25l.5 3h25q1 0 1 1v2.500H12.500L11 29z" fill="#222" /><circle cx="14.500" cy="36" r="3.700" fill="#222" /><circle cx="39.500" cy="36" r="3.700" fill="#222" /></svg>
          <span className="absolute top-[3px] left-[23px] text-[15.200px] leading-[21px] text-white">2</span>
        </div>
      </div>
    </>
  );
}

function PageTab({ label, active }: { label: string; active?: boolean }) {
  return (
    <div className="relative flex h-[29px] w-[181px] items-center justify-center">
      <svg className="absolute inset-0" width="182" height="30" viewBox="0 0 182 30"><path d="M.5 29.500L9.500.5h161.500l9.500 29" fill={active ? "#dfdfdf" : "#fff"} stroke="#222" strokeWidth="1.100" /></svg>
      <span className="relative">{label}</span>
    </div>
  );
}

function Check({ on }: { on?: boolean }) {
  return (
    <svg className={on ? "mt-[2px]" : "ml-[1px]"} width="13" height="12" viewBox="0 0 13 12" fill="none" stroke="#000">
      <rect x="1.500" y="1.500" width="9" height="9" rx="1.500" strokeWidth="1.100" />
      {on && <path d="M3.200 5.200l2.500 2.500L11.700 1.800" strokeWidth="2.200" />}
    </svg>
  );
}

function Frame() {
  const rows: [boolean, string, string][] = [
    [true, "2", "Dressage de lions"],
    [false, "1", "Cours de jonglage"],
    [false, "3", "Cours d'équilibrisme"],
  ];
  return (
    <div className={`${SRC} mt-[22px] ml-[71px] flex h-[701px] w-[901px] shrink-0 flex-col rounded-[4px] border border-t-0 border-black bg-white`}>
      <MockHeader />
      <h1 className="mt-[32px] ml-[49px] h-[46px] text-[30.500px] leading-[46px] text-[#333]">MON COMPTE</h1>
      <div className="mt-[11px] ml-[39px] flex text-[13.500px]">
        <PageTab label="Mon profil" />
        <PageTab label="Mes demandes de devis" active />
        <div className="pl-px"><PageTab label="Mes messages reçus" /></div>
      </div>
      <div className="ml-[39px] h-[408px] w-[811px] border border-black bg-[#dfdfdf] pt-[37px] pl-[26px]">
        <div className="grid h-[337px] w-[754px] grid-cols-[100px_80px_1fr] grid-rows-[84px_83px_84px_84px] border border-black bg-[#e5e5e5] text-[11.700px] text-black">
          {["Validation", "Nombre", "Type"].map((h, i) => (
            <div key={h} className={`flex items-center justify-center border-b border-b-[#555] bg-[#9d9d9d] pb-[2px] text-white ${i < 2 ? "border-r border-r-black" : ""}`}>{h}</div>
          ))}
          {rows.map(([on, n, t], i) => {
            const bg = i === 1 ? "bg-white border-b border-b-[#444]" : i === 0 ? "border-b border-b-[#777]" : "";
            return [
              <div key={"a" + i} className={`flex items-center justify-center border-r border-r-black pb-[2px] ${bg}`}><Check on={on} /></div>,
              <div key={"b" + i} className={`flex items-center justify-center border-r border-r-black pb-[2px] ${bg}`}>{n}</div>,
              <div key={"c" + i} className={`flex items-center justify-center pr-[2px] pb-[2px] ${bg}`}>{t}</div>,
            ];
          })}
        </div>
      </div>
    </div>
  );
}

function Canvas() {
  return (
    <div className="flex min-w-0 flex-1 flex-col bg-[#efefef]">
      <div className="flex h-[759px]">
        <div className="flex w-[1201px] items-start self-stretch bg-white">
          <Frame />
          <button className={`${SRC} ml-[91px] h-[30px] w-[100px] bg-[#f44336] text-[12.500px] leading-[30px] text-white`}>Save Changes</button>
        </div>
        <div className="ml-auto h-[462px] w-[5px] bg-[#f29069]" />
      </div>
      <div className="mt-auto ml-px h-[5px] w-[791px] bg-[#f29069]" />
    </div>
  );
}

export default function App() {
  return (
    <div className="flex h-[900px] w-[1600px] flex-col overflow-hidden bg-white">
      <TopBar />
      <div className="flex min-h-0 flex-1">
        <Launcher />
        <div className="flex min-w-0 flex-1 flex-col">
          <TitleBar />
          <TabStrip />
          <NavBar />
          <div className="flex min-h-0 flex-1">
            <LeftApp />
            <Canvas />
          </div>
        </div>
      </div>
    </div>
  );
}
